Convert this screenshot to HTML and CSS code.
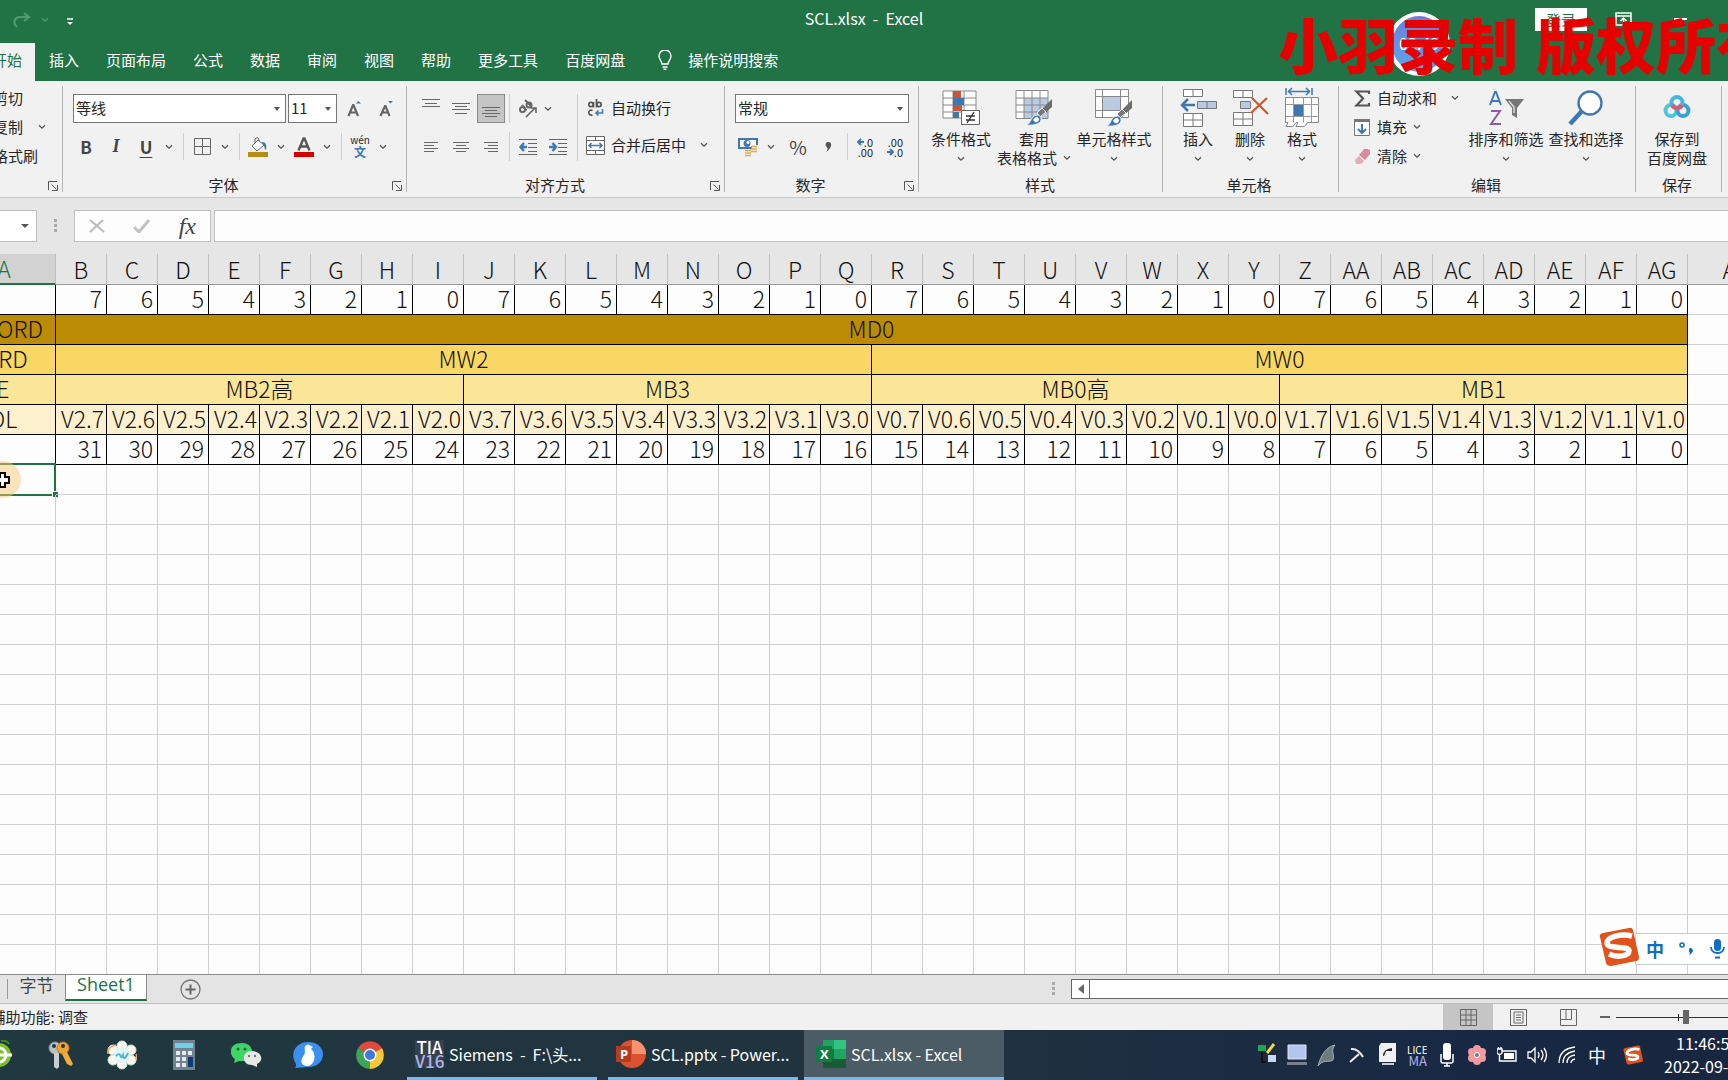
FILE: index.html
```html
<!DOCTYPE html>
<html lang="zh-CN">
<head>
<meta charset="utf-8">
<title>SCL.xlsx - Excel</title>
<link rel="stylesheet" href="styles.css">
</head>
<body>
<svg class="defs" aria-hidden="true">
  <symbol id="chev" viewBox="0 0 8 6"><path d="M1 1.2 4 4.2 7 1.2" fill="none" stroke="currentColor" stroke-width="1.3"/></symbol>
  <symbol id="launch" viewBox="0 0 10 10"><path d="M.5 9V.5H9M3.5 3.5 8.5 8.5M9.5 4v5.500H4" fill="none" stroke="#555"/></symbol>
  <symbol id="brush" viewBox="0 0 28 28"><path d="M27 1v8L17 18l-3-4z" fill="#6d6d6d"/><path d="m17 10 4 4-6 5-3-4z" fill="#777" stroke="#f1f1f1"/><path d="M1 27c4-1 4-4 6-7 3-4 8-4 9 0 1 5-5 8-15 7z" fill="#3f78b0" stroke="#f1f1f1"/><path d="M8 22c2-4 6-4 6 0-1 2-3 3-4 2z" fill="#fff"/></symbol>
  <symbol id="sogou" viewBox="0 0 40 38"><path d="M1 9Q0 6 4 5L30 0q3-1 4 2l6 27q0 4-3 4L12 38q-4 0-5-3z" fill="#e2501b"/><path d="M33 8C22 5 8 9 8 15c0 7 22 2 22 8 0 5-12 7-20 3" fill="none" stroke="#fff" stroke-width="5.500"/></symbol>
</svg>
<div class="app">
  <header class="titlebar">
    <div class="quick">
      <button class="bare" aria-label="恢复"><svg width="19" height="16" viewBox="0 0 19 16"><path d="M4 15C-1 11 2 5 7 5h9M11 1l5 4-5 4" fill="none" stroke="#4f9b70" stroke-width="2.200"/></svg></button>
      <button class="bare faint" aria-label="恢复选项"><svg width="8" height="6"><use href="#chev"/></svg></button>
      <button class="bare custom" aria-label="自定义快速访问工具栏"><svg width="6" height="8" viewBox="0 0 6 8"><path d="M0 1h6" stroke="#fff" stroke-width="1.500"/><path d="M0 4h6L3 7z" fill="#fff"/></svg></button>
    </div>
    <h1 class="doc-title">SCL.xlsx&nbsp; -&nbsp; Excel</h1>
    <div class="win-tools">
      <button class="login">登录</button>
      <button class="bare" aria-label="功能区显示选项"><svg width="17" height="14" viewBox="0 0 17 14"><path d="M1 1h15v12H1zM1 4h15M8.500 12V6M5.500 9l3-3 3 3" fill="none" stroke="#fff" stroke-width="1.500"/></svg></button>
      <button class="bare" aria-label="最小化"><svg width="13" height="2"><path d="M0 1h13" stroke="#fff" stroke-width="2"/></svg></button>
    </div>
  </header>
  <nav class="tabs">
    <button class="tab active first">开始</button><button class="tab">插入</button><button class="tab">页面布局</button><button class="tab">公式</button><button class="tab">数据</button><button class="tab">审阅</button><button class="tab">视图</button><button class="tab">帮助</button><button class="tab">更多工具</button><button class="tab">百度网盘</button>
    <button class="tab tell"><svg width="14" height="20" viewBox="0 0 14 20"><path d="M4 14c0-3-3-4-3-8a6 6 0 0 1 12 0c0 4-3 5-3 8zM4.500 17h5M5.500 19.300h3" fill="none" stroke="#fff" stroke-width="1.400"/></svg>操作说明搜索</button>
  </nav>

  <section class="ribbon">
    <div class="group g-clip">
      <div class="stack">
        <button class="row-btn">剪切</button>
        <button class="row-btn">复制<svg class="chev" width="8" height="6"><use href="#chev"/></svg></button>
        <button class="row-btn">格式刷</button>
      </div>
      <button class="launch" aria-label="剪贴板设置"><svg width="10" height="10"><use href="#launch"/></svg></button>
    </div>

    <div class="group g-font">
      <div class="rows">
        <div class="line fields">
          <span class="combo font-name"><select aria-label="字体"><option>等线</option></select></span>
          <span class="combo font-size"><select aria-label="字号"><option>11</option></select></span>
          <button class="ib" aria-label="增大字号"><svg width="14" height="18" viewBox="0 0 14 18"><path d="M1.500 16 6 5h.500L11 16M3 12.500h6.500" fill="none" stroke="#666" stroke-width="2.200"/><path d="M9 3.500h5L11.500 1z" fill="#3f78b0"/></svg></button>
          <button class="ib" aria-label="减小字号"><svg width="14" height="18" viewBox="0 0 14 18"><path d="M1.500 16 6 6h.500l4 10M3 12.500h6" fill="none" stroke="#666" stroke-width="2.200"/><path d="M9 1h5l-2.500 2.500z" fill="#3f78b0"/></svg></button>
        </div>
        <div class="line">
          <button class="ib txt b">B</button><button class="ib txt i">I</button><button class="ib txt u">U</button><button class="cb" aria-label="下划线选项"><svg width="8" height="6"><use href="#chev"/></svg></button>
          <i class="sep"></i>
          <button class="ib" aria-label="边框"><svg width="17" height="17" viewBox="0 0 17 17"><path d="M.5.5h16v16H.5zM8.500 1v15M1 8.500h15" fill="none" stroke="#666"/></svg></button><button class="cb" aria-label="边框选项"><svg width="8" height="6"><use href="#chev"/></svg></button>
          <i class="sep"></i>
          <button class="ib" aria-label="填充颜色"><svg width="20" height="20" viewBox="0 0 20 20"><path d="M0 15h20v5H0z" fill="#b58d14"/><path d="m4 9 6-6 6 5-7 6z" fill="#fff" stroke="#666"/><path d="M7 6V2q2-3 4 0v2" fill="none" stroke="#666"/><path d="M14 5c4 0 5 3 4 8-2-1-1-4-3-5z" fill="#3f78b0"/></svg></button><button class="cb" aria-label="填充颜色选项"><svg width="8" height="6"><use href="#chev"/></svg></button>
          <button class="ib" aria-label="字体颜色"><svg width="20" height="20" viewBox="0 0 20 20"><path d="M0 15h20v5H0z" fill="#d30000"/><path d="M4.500 13.500 9.500 1.500h1l5 12M6.500 9.500h7" fill="none" stroke="#555" stroke-width="2.300"/></svg></button><button class="cb" aria-label="字体颜色选项"><svg width="8" height="6"><use href="#chev"/></svg></button>
          <i class="sep"></i>
          <button class="ib wen"><span>wén</span><b>文</b></button><button class="cb" aria-label="拼音选项"><svg width="8" height="6"><use href="#chev"/></svg></button>
        </div>
      </div>
      <div class="label">字体</div>
      <button class="launch" aria-label="字体设置"><svg width="10" height="10"><use href="#launch"/></svg></button>
    </div>

    <div class="group g-align">
      <div class="cols">
        <div class="rows w90">
          <div class="line">
            <button class="ib" aria-label="顶端对齐"><svg width="18" height="20" viewBox="0 0 18 20"><path d="M0 .500h18M3 4.500h12M0 7.500h18" stroke="#666"/></svg></button>
            <button class="ib" aria-label="垂直居中"><svg width="18" height="20" viewBox="0 0 18 20"><path d="M0 4.500h18M3 7.500h12M0 10.500h18M3 14.500h12" stroke="#666"/></svg></button>
            <button class="ib on" aria-label="底端对齐"><svg width="18" height="20" viewBox="0 0 18 20"><path d="M0 8.500h18M3 11.500h12M0 14.500h18M3 17.500h12" stroke="#666"/></svg></button>
          </div>
          <div class="line">
            <button class="ib" aria-label="左对齐"><svg width="14" height="12" viewBox="0 0 14 12"><path d="M0 1.500h14M0 4.500h10M0 7.500h14M0 10.500h10" stroke="#666"/></svg></button>
            <button class="ib" aria-label="居中"><svg width="16" height="12" viewBox="0 0 16 12"><path d="M0 1.500h16M3 4.500h10M0 7.500h16M3 10.500h10" stroke="#666"/></svg></button>
            <button class="ib" aria-label="右对齐"><svg width="14" height="12" viewBox="0 0 14 12"><path d="M0 1.500h14M4 4.500h10M0 7.500h14M4 10.500h10" stroke="#666"/></svg></button>
          </div>
        </div>
        <div class="rows"><i class="vsep"></i><i class="vsep"></i></div>
        <div class="rows w64">
          <div class="line">
            <button class="ib" aria-label="方向"><svg width="20" height="20" viewBox="0 0 20 20"><g fill="none" stroke="#666" stroke-width="2"><circle cx="4.500" cy="10.500" r="2.500"/><path d="m4 6 4.500 5.500M7 1l6.500 6.500"/><circle cx="11" cy="6" r="2.500"/><path d="M8 18 17 9M12.500 9H18v5" stroke-width="1.600"/></g></svg></button>
            <button class="cb orient" aria-label="方向选项"><svg width="8" height="6"><use href="#chev"/></svg></button>
          </div>
          <div class="line">
            <button class="ib" aria-label="减少缩进"><svg width="18" height="18" viewBox="0 0 18 18"><path d="M0 1.500h18M9 5.500h9M9 9.500h9M9 13.500h9M0 16.500h18" stroke="#666"/><path d="M8 9H2M5 5 1.500 9 5 13" fill="none" stroke="#3f78b0" stroke-width="2.500"/></svg></button>
            <button class="ib" aria-label="增加缩进"><svg width="18" height="18" viewBox="0 0 18 18"><path d="M0 1.500h18M9 5.500h9M9 9.500h9M9 13.500h9M0 16.500h18" stroke="#666"/><path d="M0 9h6M3.500 5 7 9l-3.500 4" fill="none" stroke="#3f78b0" stroke-width="2.500"/></svg></button>
          </div>
        </div>
        <div class="rows"><i class="vline"></i></div>
        <div class="rows">
          <button class="row-btn"><svg width="19" height="18" viewBox="0 0 19 18"><g fill="none" stroke="#555" stroke-width="1.700"><circle cx="5" cy="5.500" r="2.200"/><path d="M7.500 3v5.500M10.500 0v8.500M6.500 11.500c-5-2-5 6 0 4.500"/><circle cx="13" cy="5.500" r="2.200"/></g><path d="M16.500 10v4h-6M12.500 11.500 10 14l2.500 2.500" fill="none" stroke="#3f78b0" stroke-width="1.600"/></svg>自动换行</button>
          <button class="row-btn"><svg width="19" height="19" viewBox="0 0 19 19"><path d="M.5.5h18v18H.5zM0 4.500h19M0 14.500h19M9.500 0v4.500M9.500 14.500V19" fill="#fff" stroke="#666"/><path d="M3 9.500h13M5.500 7 3 9.500 5.500 12M13.500 7 16 9.500 13.500 12" fill="none" stroke="#3f78b0" stroke-width="1.500"/></svg>合并后居中<svg class="chev" width="8" height="6"><use href="#chev"/></svg></button>
        </div>
      </div>
      <div class="label">对齐方式</div>
      <button class="launch" aria-label="对齐设置"><svg width="10" height="10"><use href="#launch"/></svg></button>
    </div>

    <div class="group g-num">
      <div class="rows">
        <div class="line fields"><span class="combo num-fmt"><select aria-label="数字格式"><option>常规</option></select></span></div>
        <div class="line">
          <button class="ib" aria-label="会计数字格式"><svg width="20" height="20" viewBox="0 0 20 20"><path d="M0 1h20v11H0z" fill="#3f78b0"/><path d="M2 3h16v7H2z" fill="#fff"/><circle cx="9" cy="6.500" r="3.500" fill="#3f78b0"/><circle cx="10" cy="5.500" r="1.500" fill="#fff"/><path d="M6 12h8V8h6v9h-6v3H6z" fill="#f1f1f1"/><path d="M13 9.500h6M13 12h6M13 14.500h6M7 13.500h6M7 16h6M7 18.500h6" stroke="#e0ab55" stroke-width="1.600"/></svg></button><button class="cb" aria-label="会计数字格式选项"><svg width="8" height="6"><use href="#chev"/></svg></button>
          <button class="ib txt pct">%</button><button class="ib" aria-label="千位分隔样式"><svg width="7" height="12" viewBox="0 0 7 12"><path d="M3 1c4-1 5 6-2 10 3-4 1-4 0-6-1-2 0-4 2-4z" fill="#555"/></svg></button>
          <i class="sep"></i>
          <button class="ib dec" aria-label="增加小数位数"><span><svg width="7" height="8" viewBox="0 0 7 8"><path d="M7 4H1M4 1 1 4l3 3" fill="none" stroke="#3f78b0" stroke-width="2"/></svg>.0</span><span>.00</span></button>
          <button class="ib dec" aria-label="减少小数位数"><span>.00</span><span><svg width="7" height="8" viewBox="0 0 7 8"><path d="M0 4h6M3 1l3 3-3 3" fill="none" stroke="#3f78b0" stroke-width="2"/></svg>.0</span></button>
        </div>
      </div>
      <div class="label">数字</div>
      <button class="launch" aria-label="数字设置"><svg width="10" height="10"><use href="#launch"/></svg></button>
    </div>

    <div class="group g-style">
      <div class="bigs">
        <button class="big w66"><svg width="38" height="36" viewBox="0 0 38 36"><path d="M1 1h33v27H1zM1 8h33M1 15h33M1 22h33M11 1v27M22 1v27" fill="#fff" stroke="#888"/><path d="M11 1h8v7h-8zM11 15h9v6h-9z" fill="#c9563a"/><path d="M11 8h11v7H11zM11 22h6v6h-6z" fill="#3f78b0"/><path d="M19.500 20.500h18v14h-18z" fill="#fff" stroke="#666"/><path d="M24 26h9M24 30h9M32 22l-7 11" stroke="#333" stroke-width="1.300"/></svg><span>条件格式</span><svg class="chev" width="8" height="6"><use href="#chev"/></svg></button>
        <button class="big w80"><svg width="38" height="36" viewBox="0 0 38 36"><path d="M1 .5h32v28H1z" fill="#fff"/><path d="M9 8h24v20H9z" fill="#b9cbe3"/><path d="M1 .5h32v28H1zM1 8h32M1 15h32M1 22h32M9 1v27M17 1v27M25 1v27" fill="none" stroke="#888"/><svg x="10" y="8" width="28" height="28"><use href="#brush"/></svg></svg><span>套用</span><span class="two">表格格式<svg class="chev" width="8" height="6"><use href="#chev"/></svg></span></button>
        <button class="big w80"><svg width="38" height="38" viewBox="0 0 38 38"><path d="M.5.5h33v28H.5z" fill="#fff"/><path d="M8 8h17v13H8z" fill="#b9cbe3"/><path d="M.5.5h33v28H.5zM0 7.500h34M0 21.500h34M7.500 0v29M25.500 0v29" fill="none" stroke="#888"/><svg x="10" y="10" width="28" height="28"><use href="#brush"/></svg></svg><span>单元格样式</span><svg class="chev" width="8" height="6"><use href="#chev"/></svg></button>
      </div>
      <div class="label">样式</div>
    </div>

    <div class="group g-cells">
      <div class="bigs">
        <button class="big w52"><svg width="37" height="38" viewBox="0 0 37 38"><path d="M3.500.5h19v7h-19zM13 .5v7M3.500 24.500h19v13h-19zM3.500 31h19M13 24.500v13" fill="#fff" stroke="#777"/><path d="M17.500 12.500h19v7h-19zM27 12.500v7" fill="#b9cbe3" stroke="#777"/><path d="M15 16H2M8 10l-6 6 6 6" fill="none" stroke="#3f78b0" stroke-width="2.500"/></svg><span>插入</span><svg class="chev" width="8" height="6"><use href="#chev"/></svg></button>
        <button class="big w52"><svg width="37" height="36" viewBox="0 0 37 36"><path d="M1.500.5h19v7h-19zM11 .5v7M1.500 22.500h19v13h-19zM1.500 29h19M11 22.500v13" fill="#fff" stroke="#777"/><path d="M8.500 11.500h10v7h-10z" fill="#b9cbe3" stroke="#777"/><path d="m20 8 16 16M35 8 19 23" fill="none" stroke="#cc5a35" stroke-width="2.300"/></svg><span>删除</span><svg class="chev" width="8" height="6"><use href="#chev"/></svg></button>
        <button class="big w52"><svg width="34" height="40" viewBox="0 0 34 40"><path d="M.5 9.500h33v25h-11l-3 4H11l2-4h-2l-3 4H1l2-4H.500z" fill="#fff" stroke="#888"/><path d="M1 16.500h33M1 28.500h33M8.500 9.500v25M18.500 9.500v25M26.500 9.500v25" stroke="#999"/><path d="M9 17h9v11H9z" fill="#3f78b0"/><path d="M1 0v7M27 0v7M3 3.500h22M7 0 3.500 3.500 7 7M21 0l3.500 3.500L21 7" fill="none" stroke="#3f78b0" stroke-width="1.500"/></svg><span>格式</span><svg class="chev" width="8" height="6"><use href="#chev"/></svg></button>
      </div>
      <div class="label">单元格</div>
    </div>

    <div class="group g-edit">
      <div class="cols">
        <div class="stack">
          <button class="row-btn sum"><svg width="17" height="17" viewBox="0 0 17 17"><path d="M15 4V1.500H2.500l6.500 7-6.500 7H15V13" fill="none" stroke="#555" stroke-width="2.200"/></svg>自动求和<svg class="chev" width="8" height="6"><use href="#chev"/></svg></button>
          <button class="row-btn"><svg width="17" height="17" viewBox="0 0 17 17"><path d="M.5.5h15v16H.5z" fill="#fff" stroke="#777"/><path d="M0 0h16v3H0z" fill="#777"/><path d="M8 5v9M4 10l4 4 4-4" fill="none" stroke="#3f78b0" stroke-width="2"/></svg>填充<svg class="chev" width="8" height="6"><use href="#chev"/></svg></button>
          <button class="row-btn"><svg width="17" height="17" viewBox="0 0 17 17"><path d="m5 7 5-6q2-1 6 1v4L11 12z" fill="#de8a9e"/><path d="m1 12 4-4 5 5-3 3H2z" fill="#e9a9b7"/></svg>清除<svg class="chev" width="8" height="6"><use href="#chev"/></svg></button>
        </div>
        <div class="bigs">
          <button class="big w80"><svg width="35" height="36" viewBox="0 0 35 36"><path d="M1 15 6 2h1l5 13M3 11h7" fill="none" stroke="#3f78b0" stroke-width="2"/><path d="M2 21h9L2 34h10" fill="none" stroke="#8c5ba6" stroke-width="2"/><path d="M16 9h19l-7 9v10l-5-3v-7z" fill="#777"/><path d="m20 11 5 6v6" fill="none" stroke="#ddd" stroke-width="1.500"/></svg><span>排序和筛选</span><svg class="chev" width="8" height="6"><use href="#chev"/></svg></button>
          <button class="big w80"><svg width="36" height="36" viewBox="0 0 36 36"><path d="M2 34 14 21" stroke="#3f78b0" stroke-width="4.500"/><circle cx="22" cy="13" r="11.500" fill="#fff" stroke="#3f78b0" stroke-width="2.300"/></svg><span>查找和选择</span><svg class="chev" width="8" height="6"><use href="#chev"/></svg></button>
        </div>
      </div>
      <div class="label">编辑</div>
    </div>

    <div class="group g-save">
      <div class="bigs">
        <button class="big w80"><svg width="28" height="36" viewBox="0 0 28 36"><g fill="none" stroke-width="4"><circle cx="8" cy="20.500" r="5.500" stroke="#4cc6dc"/><circle cx="20" cy="20.500" r="5.500" stroke="#3aa0cf"/><circle cx="14" cy="12.500" r="5.500" stroke="#4bb6dc"/><path d="M9 15a5.500 5.500 0 0 0 10 0" stroke="#e4566b"/></g></svg><span>保存到</span><span>百度网盘</span></button>
      </div>
      <div class="label">保存</div>
    </div>
  </section>

  <section class="formula">
    <span class="combo name-box"><input type="text" aria-label="名称框"></span>
    <svg class="grip" width="3" height="14"><path d="M0 1.500h3M0 6.500h3M0 11.500h3" stroke="#aaa" stroke-width="3"/></svg>
    <div class="fx">
      <button class="bare" aria-label="取消"><svg width="16" height="14" viewBox="0 0 16 14"><path d="m1 1 14 12M14 1 1 13" stroke="#bbb" stroke-width="2"/></svg></button>
      <button class="bare" aria-label="输入"><svg width="17" height="14" viewBox="0 0 17 14"><path d="m1 8 5 5L16 1" fill="none" stroke="#c2c2c2" stroke-width="3"/></svg></button>
      <button class="bare fxb"><i>fx</i></button>
    </div>
    <input class="formula-input" type="text" aria-label="编辑栏">
  </section>

  <main class="sheet">
    <table class="grid" id="grid"></table>
    <div class="ime"><svg class="ime-logo" width="40" height="38"><use href="#sogou"/></svg><b>中</b><svg width="16" height="14" viewBox="0 0 16 14"><circle cx="3" cy="3" r="2" fill="none" stroke="#0e6dc4" stroke-width="1.600"/><path d="M11 6c4 0 4 5-1 7 2-3 0-2 0-4 0-2 0-3 1-3z" fill="#0e6dc4"/></svg><svg width="15" height="20" viewBox="0 0 15 20"><rect x="4" y="0" width="7" height="12" rx="3.500" fill="#0e6dc4"/><path d="M1 8c0 8 13 8 13 0M5 18.500h5" fill="none" stroke="#0e6dc4" stroke-width="1.800"/></svg></div>
  </main>

  <section class="sheetbar">
    <i class="tsep"></i>
    <button class="stab">字节</button>
    <button class="stab current">Sheet1</button>
    <button class="bare add" aria-label="新工作表"><svg width="21" height="21" viewBox="0 0 21 21"><circle cx="10.500" cy="10.500" r="9.500" fill="none" stroke="#777" stroke-width="1.300"/><path d="M10.500 5.500v10M5.500 10.500h10" stroke="#666" stroke-width="2"/></svg></button>
    <svg class="grip" width="3" height="14"><path d="M0 1.500h3M0 6.500h3M0 11.500h3" stroke="#aaa" stroke-width="3"/></svg>
    <div class="hscroll"><button class="bare" aria-label="向左滚动"><svg width="6" height="10"><path d="M6 0v10L0 5z" fill="#666"/></svg></button></div>
  </section>

  <footer class="status">
    <span class="acc">辅助功能: 调查</span>
    <div class="views">
      <button class="vb cur" aria-label="普通"><svg width="17" height="17" viewBox="0 0 17 17"><path d="M.5.5h16v16H.5zM.5 6h16M.5 11h16M6 .5v16M11 .5v16" fill="none" stroke="#666"/></svg></button>
      <button class="vb" aria-label="页面布局"><svg width="17" height="17" viewBox="0 0 17 17"><path d="M.5.5h16v16H.5zM4 3h9v11H4zM6 6h5M6 8.500h5M6 11h5" fill="none" stroke="#666"/></svg></button>
      <button class="vb" aria-label="分页预览"><svg width="17" height="17" viewBox="0 0 17 17"><path d="M.5.5h16v16H.5zM.5 10.500h11M11.500 .5v10M6 .5v10" fill="none" stroke="#666"/></svg></button>
      <button class="bare minus" aria-label="缩小"><svg width="10" height="2"><path d="M0 1h10" stroke="#333" stroke-width="1.500"/></svg></button>
      <span class="zoom"><input type="range" min="0" max="100" value="50" aria-label="缩放"></span>
    </div>
  </footer>

  <footer class="taskbar">
    <div class="pins">
      <button class="pin half" aria-label="浏览器"><svg width="13" height="30" viewBox="0 0 13 30"><circle cx="-1" cy="15" r="12" fill="#7cc02c"/><circle cx="-1" cy="15" r="7" fill="none" stroke="#fff" stroke-width="3"/><path d="M0 15h12" stroke="#fff" stroke-width="3"/><path d="M1 1q6-1 8 3" stroke="#3e8b20" fill="none" stroke-width="2"/></svg></button>
      <button class="pin" aria-label="密钥"><svg width="28" height="30" viewBox="0 0 28 30"><circle cx="9" cy="8" r="6" fill="#b9c0c4" stroke="#8a8f92"/><circle cx="8" cy="6" r="2" fill="#1f3640"/><path d="M8 13h5v14l-2 2-3-2z" fill="#c8cdd0"/><circle cx="17" cy="8" r="6" fill="#f0a531" stroke="#c37b14"/><circle cx="17" cy="6" r="2" fill="#1f3640"/><path d="m16 14 5-2 6 12-2 2-4-2z" fill="#f3ad3c"/></svg></button>
      <button class="pin" aria-label="录屏"><svg width="30" height="30" viewBox="0 0 30 30"><g fill="#fbf7ee" stroke="#c8ead9"><ellipse cx="15" cy="6" rx="5" ry="5"/><ellipse cx="15" cy="24" rx="5" ry="5"/><ellipse cx="6" cy="10" rx="5" ry="5"/><ellipse cx="24" cy="10" rx="5" ry="5"/><ellipse cx="6" cy="20" rx="5" ry="5"/><ellipse cx="24" cy="20" rx="5" ry="5"/></g><path d="M1 14q-1-7 8-9M29 14q1 2 0 6" fill="none" stroke="#f0a765" stroke-width="1.500"/><circle cx="15" cy="15" r="8" fill="#dff5f3"/><path d="M9 16c6-6 4 6 7-1 1 6 3 2 5-2" fill="none" stroke="#56b5c8" stroke-width="2"/></svg></button>
      <button class="pin" aria-label="计算器"><svg width="24" height="30" viewBox="0 0 24 30"><path d="M1 0h22v30H1z" fill="#71818f"/><path d="M3 3h18v5H3z" fill="#6fd3e8"/><path d="M4 11h4v4H4zM10 11h4v4h-4zM16 11h4v4h-4zM4 17h4v4H4zM10 17h4v4h-4zM4 23h4v4H4zM10 23h4v4h-4z" fill="#e5eaee"/><path d="M16 17h5v10h-5z" fill="#153a73"/></svg></button>
      <button class="pin" aria-label="微信"><svg width="31" height="26" viewBox="0 0 31 26"><path d="M11 1C-3 1-2 14 4 17l-1 4 5-2c17 2 17-18 3-18z" fill="#3fd467"/><circle cx="7" cy="7" r="1.500" fill="#1c6b33"/><circle cx="14" cy="7" r="1.500" fill="#1c6b33"/><path d="M21 9c-11 0-11 14 0 14l5 2 0-3c8-4 4-13-5-13z" fill="#e6e8e8"/><circle cx="18" cy="14" r="1.200" fill="#777"/><circle cx="24" cy="14" r="1.200" fill="#777"/></svg></button>
      <button class="pin" aria-label="通讯"><svg width="30" height="26" viewBox="0 0 30 26"><path d="M15 0c20 0 20 25 0 25L2 26c1-2 2-3 0-6C-3 11 3 0 15 0z" fill="#3b8fee"/><path d="M12 4q3-3 6 0l2 1-2 2c6 5 4 16-3 17-8 0-8-6-4-11 2-3 0-6 1-9z" fill="#fff"/></svg></button>
      <button class="pin" aria-label="Chrome"><svg width="28" height="28" viewBox="0 0 28 28"><path d="M14 14 2 7a14 14 0 0 1 24 0z" fill="#de4a3c"/><path d="M14 14 26 7a14 14 0 0 1-12 21z" fill="#f6c835"/><path d="M14 14v14A14 14 0 0 1 2 7z" fill="#3da557"/><circle cx="14" cy="14" r="6.500" fill="#fff"/><circle cx="14" cy="14" r="5" fill="#3f79dc"/></svg></button>
    </div>
    <div class="tasks">
      <button class="task"><span class="tia">TIA<em>V16</em></span>Siemens&nbsp; -&nbsp; F:\头...</button>
      <button class="task"><svg width="30" height="32" viewBox="0 0 30 32"><circle cx="16" cy="16" r="14" fill="#dc5231"/><path d="M16 2a14 14 0 0 1 14 14H16z" fill="#f49272"/><path d="M0 8h15v16H0z" fill="#b83a1d"/><text x="4" y="21" class="glyph">P</text></svg>SCL.pptx - Power...</button>
      <button class="task now"><svg width="30" height="32" viewBox="0 0 30 32"><path d="M7 2h11v9H7z" fill="#21a366"/><path d="M18 2h12v9H18z" fill="#33c481"/><path d="M7 11h11v10H7z" fill="#107c41"/><path d="M18 11h12v10H18z" fill="#21a366"/><path d="M7 21h23v9H7z" fill="#185c37"/><path d="M0 8h16v16H0z" fill="#107c41"/><text x="4" y="21" class="glyph">X</text></svg>SCL.xlsx - Excel</button>
    </div>
    <div class="tray">
      <span><svg width="18" height="24" viewBox="0 0 18 24"><path d="M0 2h8v6H0z" fill="#1fa354"/><path d="m9 10 7-9" stroke="#f0d64a" stroke-width="3"/><path d="M4 9v10h4" fill="none" stroke="#111" stroke-width="2"/><path d="M10 12h8v7h-8z" fill="#c9d9f5"/></svg></span>
      <span><svg width="20" height="22" viewBox="0 0 20 22"><path d="M1 1h18v14H1z" fill="#b4c6ef" stroke="#dfe5f0"/><path d="M0 18h20v3H0z" fill="#77808c"/></svg></span>
      <span><svg width="20" height="24" viewBox="0 0 20 24"><path d="M1 23C4 12 9 4 18 2c-5 6 0 9-2 15-5 3-10-1-15 6z" fill="#6d7b82" stroke="#a5b0b5"/></svg></span>
      <span><svg width="16" height="18" viewBox="0 0 16 18"><path d="M2 3q7-1 12 8M1 16 10 8" stroke="#e8e8e8" stroke-width="2" fill="none"/></svg></span>
      <span><svg width="18" height="24" viewBox="0 0 18 24"><path d="M3 0h15v19H1V3z" fill="#f0f0f0"/><path d="M5 13q0-7 9-8v3H8l-2 5z" fill="#222"/><path d="M4 21h12" stroke="#ccc" stroke-width="2"/></svg></span>
      <span class="lic">LICEN<em>MA</em></span>
      <span><svg width="14" height="24" viewBox="0 0 14 24"><rect x="3" y="0" width="8" height="17" rx="3" fill="#fff"/><path d="M1 11v7q0 2 2 2h8q2 0 2-2v-7M7 20v3M4 23h6" stroke="#fff" fill="none" stroke-width="1.500"/></svg></span>
      <span><svg width="18" height="20" viewBox="0 0 18 20"><g fill="#f19aa2"><circle cx="9" cy="4" r="4"/><circle cx="4" cy="7" r="4"/><circle cx="14" cy="7" r="4"/><circle cx="4" cy="13" r="4"/><circle cx="14" cy="13" r="4"/><circle cx="9" cy="16" r="4"/></g><circle cx="9" cy="10" r="2.500" fill="#777" stroke="#fff"/></svg></span>
      <span><svg width="20" height="17" viewBox="0 0 20 17"><path d="M5 4h14v10H4M0 2h5v4q-2.500 3-5 0zM1.500 0v2M4 0v2M2.500 8v6h2" fill="none" stroke="#fff" stroke-width="1.400"/><path d="M7 6h10v6H7z" fill="#fff"/></svg></span>
      <span><svg width="21" height="18" viewBox="0 0 21 18"><path d="M1 6h3l4-4v14l-4-4H1zM11 6q2 3 0 6M14 4q4 5 0 10M17 2q5 7 0 14" fill="none" stroke="#fff" stroke-width="1.300"/></svg></span>
      <span><svg width="18" height="18" viewBox="0 0 18 18"><path d="M1 17Q1 3 17 1M5 17Q5 7 17 5M9 17q0-7 8-8M13 17q0-3 4-4" fill="none" stroke="#fff" stroke-width="1.300"/></svg></span>
      <span class="zh">中</span>
      <span class="sg"><svg width="20" height="20"><use href="#sogou"/></svg></span>
    </div>
    <div class="clock"><time class="t">11:46:5</time><time>2022-09-</time></div>
  </footer>
</div>

<div class="overlay">
  <div class="timer">02:49</div>
  <div class="mark"><span>小羽录制</span><span>版权所有</span></div>
</div>
<script src="app.js"></script>
</body>
</html>
```
FILE: app.js
```js
// Builds the worksheet: column letters, six filled rows, then empty rows.
const table = document.getElementById('grid');
const COLS = 32;
const EMPTY_ROWS = 17;

const letter = n => (n < 26 ? '' : 'A') + String.fromCharCode(65 + (n % 26));
const el = (tag, cls, text) => {
  const node = document.createElement(tag);
  if (cls) node.className = cls;
  if (text !== undefined) node.textContent = text;
  return node;
};

const group = table.appendChild(el('colgroup'));
for (let c = 0; c <= COLS + 1; c++) {
  group.appendChild(el('col', c === 0 ? 'c-first' : c > COLS ? 'c-last' : 'c-std'));
}

const head = table.appendChild(el('thead')).appendChild(el('tr'));
for (let c = 0; c <= COLS + 1; c++) {
  head.appendChild(el('th', c === 0 ? 'picked' : '', letter(c)));
}

const body = table.appendChild(el('tbody'));
const row = (cls, first, cells, span) => {
  const tr = body.appendChild(el('tr', cls));
  tr.appendChild(el('td', 'first', first));
  cells.forEach(text => {
    const td = tr.appendChild(el('td', 'd', text));
    td.colSpan = span;
  });
  tr.appendChild(el('td', 'out'));
};
const each = fn => Array.from({ length: COLS }, (_, i) => fn(i));

row('num top', '', each(i => 7 - (i % 8)), 1);
row('dword', 'DWORD', ['MD0'], 32);
row('word', 'WORD', ['MW2', 'MW0'], 16);
row('byte', 'BYTE', ['MB2高', 'MB3', 'MB0高', 'MB1'], 8);
row('bool', 'BOOL', each(i => 'V' + [2, 3, 0, 1][Math.floor(i / 8)] + '.' + (7 - (i % 8))), 1);
row('num', '', each(i => 31 - i), 1);

for (let r = 0; r < EMPTY_ROWS; r++) {
  const tr = body.appendChild(el('tr'));
  for (let c = 0; c <= COLS + 1; c++) tr.appendChild(el('td', c > COLS ? 'out' : ''));
  if (r === 0) {
    const cell = tr.firstChild;
    cell.className = 'selected';
    cell.appendChild(el('i', 'handle'));
    const halo = cell.appendChild(el('i', 'pointer'));
    halo.innerHTML = '<svg width="18" height="18" viewBox="0 0 18 18"><path d="M6 2h5v4h4v6h-4v4H6v-4H2V6h4z" fill="#fff" stroke="#000" stroke-width="2"/></svg>';
  }
}
```
FILE: styles.css
```css
* { box-sizing: border-box; }
body {
  margin: 0;
  overflow: hidden;
  font: 15px/20px "Noto Sans CJK SC", sans-serif;
  color: #262626;
}
button, input, select { font: inherit; color: inherit; margin: 0; padding: 0; border: 0; background: none; border-radius: 0; }
button { display: flex; align-items: center; justify-content: center; white-space: nowrap; }
svg { display: block; flex: none; }
.defs { position: absolute; width: 0; height: 0; }
.app { display: flex; flex-direction: column; height: 100vh; }

/* title bar */
.titlebar { display: grid; grid-template-columns: 1fr auto 1fr; height: 43px; background: #217346; color: #fff; overflow: hidden; }
.quick { display: flex; align-items: flex-start; padding: 12px 0 0 13px; gap: 9px; }
.faint { color: #4f9b70; padding-top: 5px; }
.custom { padding: 6px 0 0 9px; }
.doc-title { margin: 0; padding-top: 8px; font-size: 16px; font-weight: 400; line-height: 20px; }
.win-tools { display: flex; justify-content: flex-end; align-items: flex-start; gap: 28px; padding: 8px 41px 0 0; }
.win-tools .bare { padding-top: 4px; min-height: 18px; }
.win-tools .bare:last-child { margin-left: 14px; }
.login { width: 52px; height: 23px; background: #fff; color: #217346; }

/* ribbon tabs */
.tabs { display: flex; height: 38px; background: #217346; color: #fff; overflow: hidden; }
.tab { padding: 0 13px 4px 14px; flex: none; }
.tab.first { width: 35px; justify-content: flex-end; padding-left: 0; }
.tab.active { background: #f1f1f1; color: #217346; }
.tell { gap: 16px; padding-left: 20px; }

/* ribbon */
.ribbon { display: flex; height: 117px; padding: 5px 0; background: #f1f1f1; border-bottom: 1px solid #c8c8c8; overflow: hidden; }
.group { position: relative; display: flex; flex-direction: column; flex: none; border-right: 1px solid #b4b4b4; }
.label { margin-top: auto; text-align: center; line-height: 14px; }
.launch { position: absolute; right: 4px; bottom: 1px; }
.g-clip { width: 63px; }
.g-font { width: 344px; padding-left: 8px; }
.g-align { width: 318px; padding-left: 9px; }
.g-num { width: 194px; padding-left: 8px; }
.g-style { width: 244px; padding-left: 9px; }
.g-cells { width: 176px; padding-left: 9px; }
.g-edit { width: 297px; padding-left: 15px; }
.g-save { width: 86px; padding-left: 1px; }
.g-font .label, .g-align .label, .g-num .label { padding-right: 30px; }
.g-style .label { padding-right: 10px; }
.g-edit .label { padding-right: 17px; }
.g-cells .label { padding-right: 12px; }
.g-save .label { padding-right: 4px; }
.cols, .line, .bigs { display: flex; }
.rows { display: flex; flex-direction: column; gap: 9px; padding-top: 8px; }
.line { height: 29px; align-items: center; }
.fields { padding-left: 2px; gap: 2px; }
.w90 { width: 90px; }
.w64 { width: 64px; }
.ib { width: 30px; height: 29px; flex: none; }
.cb { width: 16px; height: 29px; flex: none; color: #555; }
.chev { color: #555; }
.sep { width: 1px; height: 27px; margin: 0 3px 0 6px; background: #cfcfcf; }
.vsep { width: 1px; height: 29px; margin: 0 3px; background: #cfcfcf; }
.vline { width: 1px; height: 67px; margin: 0 2px 0 0; background: #cfcfcf; }
.on { width: 28px; margin: 0 1px; background: #c5c5c5; border: 1px solid #8a8a8a; }
.orient { margin-left: -3px; }
.txt { font-size: 17px; color: #444; }
.b { font-weight: 700; }
.i { font: italic 700 18px "Liberation Serif", serif; }
.u { font-weight: 700; text-decoration: underline; text-underline-offset: 3px; }
.pct { font-size: 19px; margin-left: 4px; }
.g-num .sep { margin: 0 2px 0 4px; }
.wen { flex-direction: column; font-size: 10px; line-height: 10px; }
.wen b { font-size: 12px; line-height: 13px; color: #3f78b0; }
.dec { flex-direction: column; align-items: flex-end; padding-right: 7px; font-size: 11px; line-height: 10px; }
.dec span { display: flex; align-items: center; }
.combo { position: relative; display: block; height: 29px; background: #fff; border: 1px solid #767676; }
.combo select, .combo input { appearance: none; display: block; width: 100%; height: 25px; padding-left: 2px; outline: 0; }
.combo::after { content: ""; position: absolute; right: 5px; top: 12px; border: 3px solid transparent; border-top: 4px solid #555; pointer-events: none; }
.font-name { width: 213px; }
.font-size { width: 49px; }
.num-fmt { width: 174px; }
.stack { display: flex; flex-direction: column; gap: 5px; align-items: flex-start; }
.row-btn { height: 24px; gap: 6px; }
.g-clip .row-btn { justify-content: flex-end; width: 23px; gap: 15px; }
.g-clip .row-btn:nth-child(2) { width: 46px; }
.g-clip .row-btn:nth-child(3) { width: 38px; }
.g-align .row-btn { height: 28px; padding-left: 6px; justify-content: flex-start; }
.g-align .row-btn .chev { margin-left: 8px; }
.sum .chev { margin-left: 8px; }
.g-edit .stack { width: 112px; }
.big { flex-direction: column; justify-content: flex-start; flex: none; height: 84px; line-height: 19px; }
.big > svg:first-child { height: 42px; margin: 1px 0 0; }
.big > .chev { margin-top: 8px; }
.two { display: flex; align-items: center; gap: 6px; }
.w66 { width: 66px; }
.w52 { width: 52px; }
.w80 { width: 80px; }

/* formula bar */
.formula { display: flex; height: 56px; padding: 12px 0; background: #e6e6e6; }
.formula .combo { width: 37px; height: 32px; border-color: #c0c0c0; border-left: 0; }
.formula .combo::after { right: 7px; top: 13px; border-width: 4px; border-bottom-width: 0; }
.grip { align-self: center; }
.formula .grip { margin: 0 17px 0 17px; }
.fx { display: flex; width: 137px; height: 32px; padding: 0 14px; justify-content: space-between; background: #fdfdfd; border: 1px solid #c0c0c0; }
.fxb { font: 400 24px "Liberation Serif", serif; color: #444; }
.formula-input { flex: 1; height: 32px; margin-left: 3px; background: #fdfdfd; border: 1px solid #c0c0c0; border-right: 0; outline: 0; }

/* worksheet */
.sheet { position: relative; flex: 1; min-height: 0; overflow: hidden; background: #fdfdfd; }
.grid { table-layout: fixed; width: 1835px; margin-left: -47px; border-collapse: separate; border-spacing: 0; font-size: 23px; font-weight: 300; line-height: 27px; color: #111; }
.c-first { width: 103px; }
.c-std { width: 51px; }
.c-last { width: 100px; }
th { height: 31px; padding: 0; font-weight: 300; background: #e6e6e6; border-right: 1px solid #c0c0c0; border-bottom: 1px solid #9b9b9b; }
th.picked { background: #d2d2d2; color: #217346; border-bottom: 2px solid #217346; }
td { position: relative; height: 30px; padding: 0 0 2px; border-right: 1px solid #d0d0d0; border-bottom: 1px solid #d0d0d0; white-space: nowrap; }
.d { text-align: center; border-color: #000; }
.first { padding-left: 9px; border-color: #000; }
.num .d { text-align: right; padding-right: 4px; }
.dword .d, .dword .first { background: #bb8b05; }
.word .d, .word .first { background: #fad764; }
.byte .d, .byte .first { background: #fbe598; }
.bool .d, .bool .first { background: #fdf0cf; }
.byte .first, .bool .first { padding-left: 4px; }
.bool .d { text-align: left; padding-left: 5px; overflow: hidden; }
.selected::before { content: ""; position: absolute; inset: -2px -1px -2px 0; border: 2px solid #217346; }
.handle { position: absolute; right: -3px; bottom: -3px; width: 5px; height: 5px; background: #217346; outline: 1px solid #fff; }
.pointer { position: absolute; left: 31px; top: -4px; width: 37px; height: 37px; padding: 10px; border-radius: 50%; background: rgba(250, 200, 120, .5); }
.ime { position: absolute; right: 0; bottom: 9px; display: flex; align-items: center; gap: 15px; width: 93px; height: 32px; padding-left: 10px; background: #fff; border: 1px solid #c5cdd8; border-right: 0; color: #0e6dc4; }
.ime b { font-size: 18px; }
.ime-logo { position: absolute; left: -37px; bottom: -2px; }

/* sheet tabs and scroll bar */
.sheetbar { display: flex; align-items: center; height: 29px; border-top: 1px solid #8c8c8c; background: #e4e4e4; overflow: hidden; }
.tsep { width: 1px; height: 20px; margin: 0 0 0 7px; background: #999; }
.stab { height: 26px; align-self: flex-start; width: 57px; font-size: 17px; color: #444; padding-bottom: 6px; }
.current { width: 82px; font-size: 18px; font-family: "Open Sans", "Noto Sans CJK SC", sans-serif; background: #fff; color: #217346; border: 1px solid #8c8c8c; border-top: 0; border-bottom: 2px solid #217346; }
.add { margin-left: 33px; }
.sheetbar .grip { margin-left: auto; margin-right: 16px; }
.hscroll { display: flex; flex: none; width: 657px; height: 20px; background: #fff; border: 1px solid #666; border-right: 0; }
.hscroll button { width: 18px; border-right: 1px solid #666; }

/* status bar */
.status { display: flex; height: 27px; justify-content: space-between; background: #f1f1f1; border-top: 1px solid #c0c0c0; overflow: hidden; }
.acc { display: flex; width: 88px; justify-content: flex-end; align-items: center; white-space: nowrap; }
.views { display: flex; flex: none; margin-right: -28px; }
.vb { width: 50px; }
.cur { background: #c5c5c5; }
.minus { margin: 0 6px 0 7px; }
.zoom { position: relative; display: flex; align-items: center; width: 140px; }
.zoom::before { content: ""; position: absolute; left: 62px; top: 10px; width: 1px; height: 7px; background: #222; }
.zoom input { appearance: none; width: 100%; height: 1px; background: #333; }
.zoom input::-webkit-slider-thumb { appearance: none; width: 6px; height: 14px; background: #666; }

/* taskbar */
.taskbar { display: flex; height: 50px; flex: none; background: linear-gradient(90deg, #203840 0, #20323f 55%, #182844 85%, #18263f 100%); color: #fff; font-size: 16px; overflow: hidden; }
.pins { display: flex; flex: none; width: 407px; }
.pin { width: 62px; flex: none; }
.half { width: 29px; justify-content: flex-start; }
.tasks { display: flex; gap: 11px; }
.task { width: 190px; padding-left: 8px; gap: 5px; justify-content: flex-start; border-bottom: 3px solid #76b9ed; }
.now { width: 200px; margin-left: -5px; padding-left: 12px; background: #4b5c66; }
.tia { display: flex; flex-direction: column; width: 29px; font-weight: 500; font-size: 17px; line-height: 14px; background: #36404f; }
.tia em, .lic em { font-style: normal; color: #b0b4ea; }
.glyph { font: 700 13px "Open Sans", sans-serif; fill: #fff; }
.tray { display: flex; margin-left: auto; }
.tray span { display: flex; width: 30px; align-items: center; justify-content: center; }
.tray .lic { width: 20px; margin: 0 5px; flex-direction: column; align-items: flex-start; font-size: 10px; line-height: 11px; overflow: hidden; }
.lic em { font-size: 13px; align-self: flex-end; }
.tray .zh { font-size: 18px; }
.tray .sg { width: 42px; }
.clock { display: flex; flex-direction: column; justify-content: center; width: 64px; margin-left: 10px; line-height: 23px; white-space: nowrap; }
.t { padding-left: 12px; }

/* recording overlay */
.overlay { position: absolute; top: 0; right: 0; width: 450px; height: 81px; overflow: hidden; pointer-events: none; }
.timer { position: absolute; left: 110px; top: 12px; width: 62px; height: 64px; border: 4px solid #fff; border-radius: 50%; background: linear-gradient(200deg, #7077d0, #58a9f0); color: #fff; font-size: 16px; line-height: 54px; text-align: center; }
.mark { position: absolute; left: 0; top: -1px; display: flex; gap: 18px; font-size: 60px; font-weight: 900; line-height: 88px; color: #e60000; white-space: nowrap; }
```
